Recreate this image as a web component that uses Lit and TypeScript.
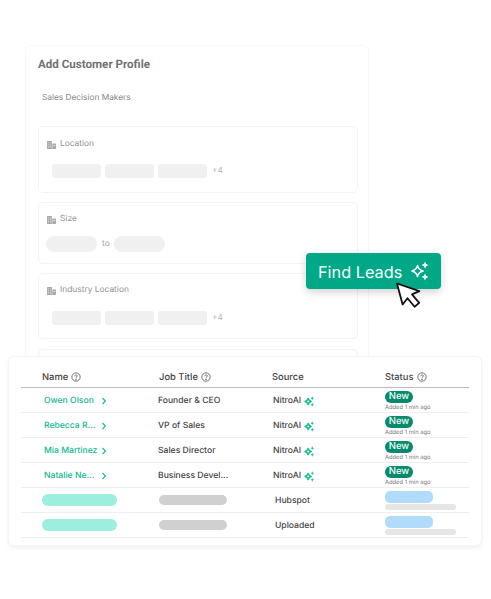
import { LitElement, css, html, svg } from "lit";
import { customElement } from "lit/decorators.js";

type Lead = { name: string; title: string };

const LEADS: Lead[] = [
    { name: "Owen Olson", title: "Founder & CEO" },
    { name: "Rebecca R...", title: "VP of Sales" },
    { name: "Mia Martinez", title: "Sales Director" },
    { name: "Natalie Ne...", title: "Business Devel..." },
];

const helpIcon = html`<svg class="help" viewBox="0 0 12 12" fill="none" stroke="#444" stroke-width="0.9">
    <circle cx="6" cy="6" r="5"></circle>
    <path d="M4.6 4.7a1.4 1.4 0 1 1 2.2 1.2c-.5.3-.8.6-.8 1.1" stroke-linecap="round"></path>
    <circle cx="6" cy="8.7" r="0.35" fill="#444"></circle>
</svg>`;

const buildingIcon = html`<svg class="building" viewBox="0 0 10 9" fill="#a9a9a9">
    <path d="M0 0h5.4v9H0z"></path>
    <path d="M5.9 2.8H10V9H5.9z"></path>
    <path d="M1 1.6h1.2v1H1zM3.2 1.6h1.2v1H3.2zM1 3.8h1.2v1H1zM3.2 3.8h1.2v1H3.2zM1 6h1.2v1H1zM3.2 6h1.2v1H3.2zM7 4.4h1.8v1.2H7z" fill="#e4e4e4"></path>
</svg>`;

// 4 point star with two small diamonds, used on the button and in the source column
const sparkle = (cls: string, color: string) => html`<svg class=${cls} viewBox="0 0 20 20">
    ${svg`<path class="star" d="M7.5 4.4c.7 3.4 2 4.7 5.6 5.6-3.6.9-4.9 2.2-5.6 5.6-.7-3.4-2-4.7-5.6-5.6 3.6-.9 4.9-2.2 5.6-5.6z"
        fill="none" stroke=${color} stroke-linejoin="round"></path>
    <path d="M15 .6l1.1 2.4 2.4 1.1-2.4 1.1-1.1 2.4-1.1-2.4-2.4-1.1 2.4-1.1z" fill=${color}></path>
    <path d="M15 12.4l1.1 2.4 2.4 1.1-2.4 1.1-1.1 2.4-1.1-2.4-2.4-1.1 2.4-1.1z" fill=${color}></path>`}
</svg>`;

@customElement("app-root")
export class AppRoot extends LitElement {
    renderChips() {
        return html`
            <div class="chips">
                <span class="chip"></span>
                <span class="chip"></span>
                <span class="chip"></span>
                <span class="more">+4</span>
            </div>
        `;
    }

    renderLead(lead: Lead) {
        return html`
            <div class="row">
                <div class="name"><span class="name-text">${lead.name}</span><span class="chev">
                    <svg viewBox="0 0 6 8" fill="none" stroke="#14b893" stroke-width="1.1"><path d="M1.5 1l3 3-3 3"></path></svg>
                </span></div>
                <div class="job">${lead.title}</div>
                <div class="source">NitroAI ${sparkle("spark-small", "#19bd98")}</div>
                <div class="status">
                    <span class="badge">New</span>
                    <span class="added">Added 1 min ago</span>
                </div>
            </div>
        `;
    }

    renderPlaceholder(source: string) {
        return html`
            <div class="row">
                <div class="name"><span class="bar-teal"></span></div>
                <div class="job"><span class="bar-gray"></span></div>
                <div class="source plain">${source}</div>
                <div class="status loading">
                    <span class="bar-blue"></span>
                    <span class="bar-light"></span>
                </div>
            </div>
        `;
    }

    render() {
        return html`
            <div class="panel">
                <h1>Add Customer Profile</h1>
                <p class="sub">Sales Decision Makers</p>
                <section class="card first">
                    <div class="label">${buildingIcon}Location</div>
                    ${this.renderChips()}
                </section>
                <section class="card size">
                    <div class="label">${buildingIcon}Size</div>
                    <div class="range">
                        <span class="pill"></span>
                        <span class="to">to</span>
                        <span class="pill"></span>
                    </div>
                </section>
                <section class="card third">
                    <div class="label">${buildingIcon}Industry Location</div>
                    ${this.renderChips()}
                </section>
                <section class="card last"></section>
            </div>

            <div class="cta">
                <span>Find Leads</span>
                ${sparkle("spark-big", "#ffffff")}
            </div>
            <svg class="cursor" viewBox="0 0 27 27">
                <path d="M2 1.5l5.6 21 4.9-6.3 7.1 8.6 4.6-3.9-7.2-8.5 7.4-3.2z" fill="#fff" stroke="#111" stroke-width="1.8" stroke-linejoin="round"></path>
            </svg>

            <div class="table-card">
                <div class="table">
                    <div class="row head">
                        <div>Name ${helpIcon}</div>
                        <div>Job Title ${helpIcon}</div>
                        <div>Source</div>
                        <div>Status ${helpIcon}</div>
                    </div>
                    ${LEADS.map((lead) => this.renderLead(lead))}
                    ${this.renderPlaceholder("Hubspot")}
                    ${this.renderPlaceholder("Uploaded")}
                </div>
            </div>
        `;
    }

    static styles = css`
        :host {
            display: block;
            position: relative;
            width: 491px;
            height: 599px;
            overflow: hidden;
            padding-top: 45px;
            box-sizing: border-box;
            background: #fff;
            font-family: Inter, "Liberation Sans", sans-serif;
            font-variation-settings: "opsz" 32;
            color: #2f2f2f;
            text-rendering: geometricPrecision;
        }

        .panel {
            box-sizing: border-box;
            width: 344px;
            height: 311px;
            margin-left: 25px;
            padding: 0 12px 0 12px;
            overflow: hidden;
            border: 1px solid #f8f8f9;
            border-bottom: none;
            border-radius: 6px 6px 0 0;
        }

        h1 {
            margin: 11px 0 0 0;
            font-family: Roboto, "Noto Sans", sans-serif;
            font-size: 11.6px;
            line-height: 14px;
            font-weight: 700;
            color: #727272;
        }

        .sub {
            margin: 20px 0 0 4px;
            font-size: 8.3px;
            line-height: 14px;
            color: #858585;
        }

        .card {
            box-sizing: border-box;
            width: 320px;
            margin-top: 9px;
            padding: 11px 8px 0 8px;
            border: 1px solid #f2f3f6;
            border-radius: 5px;
        }

        .card.first {
            margin-top: 21px;
            height: 67px;
            padding-top: 12px;
        }

        .first .chips {
            margin-top: 14px;
        }

        .card.size {
            height: 62px;
        }

        .card.third {
            height: 66px;
        }

        .card.last {
            margin-top: 10px;
            height: 40px;
        }

        .label {
            display: flex;
            align-items: center;
            gap: 4px;
            font-size: 8.4px;
            line-height: 11px;
            color: #929292;
        }

        .building {
            width: 9px;
            height: 8px;
        }

        .chips {
            display: flex;
            align-items: center;
            gap: 4px;
            margin: 15px 0 0 5px;
        }

        .chip {
            width: 49px;
            height: 14px;
            border-radius: 3px;
            background: #f0f0f0;
        }

        .more {
            margin-left: 1px;
            font-size: 8.4px;
            color: #b5b5b5;
        }

        .range {
            display: flex;
            align-items: center;
            gap: 5px;
            margin: 11px 0 0 -1px;
        }

        .pill {
            width: 51px;
            height: 16px;
            border-radius: 8px;
            background: #f0f0f0;
        }

        .to {
            width: 7px;
            font-size: 8.4px;
            color: #a5a5a5;
        }

        .cta {
            position: absolute;
            left: 306px;
            top: 253px;
            box-sizing: border-box;
            width: 135px;
            height: 36px;
            display: flex;
            align-items: center;
            gap: 8px;
            padding-left: 12px;
            border-radius: 4px;
            background: #01a888;
            color: #f4fffc;
            font-size: 16.3px;
            white-space: nowrap;
            box-shadow: 0 3px 8px rgba(0, 0, 0, 0.18);
        }

        .cta span {
            padding-top: 1px;
        }

        .spark-big {
            width: 20px;
            height: 20px;
            flex: none;
        }

        .spark-big .star {
            stroke-width: 1.5;
        }

        .cursor {
            position: absolute;
            left: 395px;
            top: 282px;
            width: 27px;
            height: 27px;
        }

        .table-card {
            box-sizing: border-box;
            width: 474px;
            height: 190px;
            margin-left: 8px;
            padding: 8px 13px 0 12px;
            background: #fff;
            border: 1px solid #f5f5f5;
            border-radius: 6px;
            box-shadow: 0 2px 4px rgba(0, 0, 0, 0.06);
        }

        .table {
            width: 448px;
        }

        .row {
            box-sizing: border-box;
            display: grid;
            grid-template-columns: 117px 113px 113px 1fr;
            align-items: center;
            height: 25px;
            padding-left: 21px;
            padding-top: 1px;
            border-bottom: 1px solid #efefef;
            font-size: 8.6px;
            font-weight: 500;
        }

        .row.head {
            height: 23px;
            padding-top: 2px;
            border-bottom: 1px solid #bdbdbd;
            font-size: 9.4px;
            color: #444;
        }

        .head > div {
            display: flex;
            align-items: center;
            gap: 3px;
        }

        .help {
            width: 10px;
            height: 10px;
        }

        .name {
            display: flex;
            align-items: center;
            color: #14b893;
        }

        .name-text {
            box-sizing: border-box;
            width: 59px;
            padding-left: 2px;
            white-space: nowrap;
        }

        .chev {
            display: flex;
        }

        .chev svg {
            width: 6px;
            height: 8px;
        }

        .job {
            margin-left: -1px;
            color: #444;
        }

        .source {
            display: flex;
            align-items: center;
            gap: 3px;
            margin-left: 1px;
            color: #444;
        }

        .source.plain {
            margin-left: 3px;
        }

        .spark-small {
            width: 11px;
            height: 11px;
        }

        .spark-small .star {
            stroke-width: 2.8;
        }

        .status {
            display: flex;
            flex-direction: column;
            align-items: flex-start;
            align-self: start;
            margin-top: 2px;
        }

        .status.loading {
            gap: 1px;
        }

        .badge {
            box-sizing: border-box;
            width: 28px;
            height: 12px;
            border-radius: 6px;
            background: #068a6b;
            color: #f2fffb;
            font-size: 9.5px;
            line-height: 11.5px;
            text-align: center;
        }

        .added {
            font-size: 5.8px;
            font-weight: 400;
            line-height: 10px;
            color: #777;
            white-space: nowrap;
        }

        .bar-teal {
            width: 75px;
            height: 12px;
            margin-top: -1px;
            border-radius: 6px;
            background: #9befdc;
        }

        .bar-gray {
            display: block;
            width: 68px;
            height: 10px;
            margin: -1px 0 0 1px;
            border-radius: 5px;
            background: #d0d0d0;
        }

        .bar-blue {
            width: 48px;
            height: 12px;
            border-radius: 5px;
            background: #b1dbfb;
        }

        .bar-light {
            width: 71px;
            height: 6px;
            border-radius: 3px;
            background: #e6e6e6;
        }
    `;
}
